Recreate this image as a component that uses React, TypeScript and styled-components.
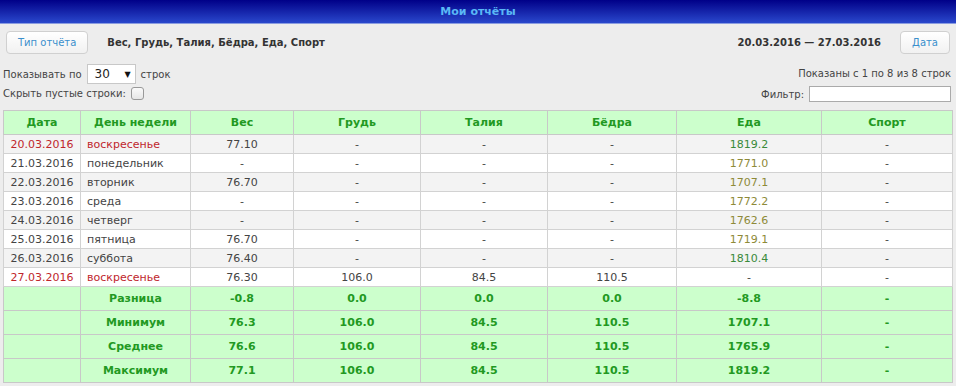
import styled, { createGlobalStyle } from "styled-components";

const GlobalStyle = createGlobalStyle`
    body {
        margin: 0;
        background: #ededed;
        font-family: "DejaVu Sans", Verdana, sans-serif;
        font-size: 11px;
        color: #333;
    }
`;

interface Row
{
    date: string;
    day: string;
    weight: string;
    chest: string;
    waist: string;
    hips: string;
    food: string;
    foodGood: boolean;
    sport: string;
    sunday?: boolean;
}

const rows: Row[] = [
    { date: "20.03.2016", day: "воскресенье", weight: "77.10", chest: "-", waist: "-", hips: "-", food: "1819.2", foodGood: true, sport: "-", sunday: true },
    { date: "21.03.2016", day: "понедельник", weight: "-", chest: "-", waist: "-", hips: "-", food: "1771.0", foodGood: false, sport: "-" },
    { date: "22.03.2016", day: "вторник", weight: "76.70", chest: "-", waist: "-", hips: "-", food: "1707.1", foodGood: false, sport: "-" },
    { date: "23.03.2016", day: "среда", weight: "-", chest: "-", waist: "-", hips: "-", food: "1772.2", foodGood: false, sport: "-" },
    { date: "24.03.2016", day: "четверг", weight: "-", chest: "-", waist: "-", hips: "-", food: "1762.6", foodGood: false, sport: "-" },
    { date: "25.03.2016", day: "пятница", weight: "76.70", chest: "-", waist: "-", hips: "-", food: "1719.1", foodGood: false, sport: "-" },
    { date: "26.03.2016", day: "суббота", weight: "76.40", chest: "-", waist: "-", hips: "-", food: "1810.4", foodGood: true, sport: "-" },
    { date: "27.03.2016", day: "воскресенье", weight: "76.30", chest: "106.0", waist: "84.5", hips: "110.5", food: "-", foodGood: false, sport: "-", sunday: true },
];

const totals = [
    { label: "Разница", values: [ "-0.8", "0.0", "0.0", "0.0", "-8.8", "-" ] },
    { label: "Минимум", values: [ "76.3", "106.0", "84.5", "110.5", "1707.1", "-" ] },
    { label: "Среднее", values: [ "76.6", "106.0", "84.5", "110.5", "1765.9", "-" ] },
    { label: "Максимум", values: [ "77.1", "106.0", "84.5", "110.5", "1819.2", "-" ] },
];

const columns = [ "Дата", "День недели", "Вес", "Грудь", "Талия", "Бёдра", "Еда", "Спорт" ];
const widths = [ 77, 110, 103, 127, 127, 129, 145, 131 ];

const TitleBar = styled.div`
    height: 23px;
    background: linear-gradient(#000088, #2a48cc);
    border-bottom: 1px solid #8a9ce0;
    display: flex;
    align-items: center;
    justify-content: center;
    color: #5ab8f5;
    font-weight: bold;
    font-size: 11px;
`;

const Toolbar = styled.div`
    display: flex;
    align-items: center;
    justify-content: space-between;
    padding: 7px 6px 0 6px;
`;

const ToolGroup = styled.div`
    display: flex;
    align-items: center;
    gap: 19px;
`;

const Button = styled.button`
    height: 23px;
    padding: 0 11px;
    background: linear-gradient(#ffffff, #f1f1f1);
    border: 1px solid #d0d0d0;
    border-radius: 4px;
    color: #3a8fcc;
    font-family: "DejaVu Sans", Verdana, sans-serif;
    font-size: 10px;
`;

const Summary = styled.span`
    font-weight: bold;
    font-size: 10px;
    color: #333;
`;

const Controls = styled.div`
    display: flex;
    justify-content: space-between;
    padding: 10px 5px 0 3px;
    font-size: 10px;
`;

const ControlColumn = styled.div<{ align: "start" | "end" }>`
    display: flex;
    flex-direction: column;
    align-items: flex-${p => p.align};
    gap: ${p => p.align === "end" ? "7px" : "3px"};
`;

const ControlLine = styled.div`
    display: flex;
    align-items: center;
    gap: 5px;
    color: #444;
`;

const Select = styled.div`
    display: flex;
    align-items: center;
    justify-content: space-between;
    padding: 0 4px 0 7px;
    box-sizing: border-box;
    width: 49px;
    height: 20px;
    border: 1px solid #c8c8c8;
    background: #fff;
    font-size: 12px;
    color: #222;
`;

const Arrow = styled.span`
    font-size: 8px;
    color: #111;
`;

const Checkbox = styled.span`
    display: inline-block;
    width: 11px;
    height: 11px;
    border: 1px solid #999;
    border-radius: 3px;
    background: linear-gradient(#fafafa, #e6e6e6);
`;

const FilterInput = styled.input`
    width: 142px;
    height: 16px;
    box-sizing: border-box;
    border: 1px solid #aaa;
    background: #fff;
    padding: 0;
    margin: 0;
`;

const TableWrap = styled.div`
    padding: 8px 3px 0 3px;
`;

const Table = styled.table`
    width: 949px;
    table-layout: fixed;
    border-collapse: collapse;
    border: 1px solid #c8c8c8;
`;

const HeadCell = styled.th`
    height: 23px;
    padding: 0;
    background: #ccffcc;
    color: #229922;
    font-size: 11px;
    font-weight: bold;
    border: 1px solid #c8c8c8;
    text-align: center;
`;

const DataRow = styled.tr<{ odd: boolean }>`
    background: ${p => p.odd ? "#f3f3f3" : "#ffffff"};
`;

const Cell = styled.td<{ tone?: string; left?: boolean }>`
    height: 18px;
    padding: 0 ${p => p.left ? "6px" : "0"};
    border: 1px solid #d2d2d2;
    text-align: ${p => p.left ? "left" : "center"};
    color: ${p => p.tone ?? "#444"};
    white-space: nowrap;
`;

const TotalCell = styled.td`
    height: 23px;
    padding: 0;
    background: #ccffcc;
    border: 1px solid #c8c8c8;
    text-align: center;
    color: #229922;
    font-size: 11px;
    font-weight: bold;
`;

const RED = "#c0262c";

const App = () =>
{
    return (
        <>
            <GlobalStyle />
            <TitleBar>Мои отчёты</TitleBar>
            <Toolbar>
                <ToolGroup>
                    <Button>Тип отчёта</Button>
                    <Summary>Вес, Грудь, Талия, Бёдра, Еда, Спорт</Summary>
                </ToolGroup>
                <ToolGroup>
                    <Summary>20.03.2016 — 27.03.2016</Summary>
                    <Button>Дата</Button>
                </ToolGroup>
            </Toolbar>
            <Controls>
                <ControlColumn align="start">
                    <ControlLine>
                        <span>Показывать по</span>
                        <Select><span>30</span><Arrow>▼</Arrow></Select>
                        <span>строк</span>
                    </ControlLine>
                    <ControlLine>
                        <span>Скрыть пустые строки:</span>
                        <Checkbox />
                    </ControlLine>
                </ControlColumn>
                <ControlColumn align="end">
                    <ControlLine style={{ marginTop: "4px" }}>Показаны с 1 по 8 из 8 строк</ControlLine>
                    <ControlLine>
                        <span>Фильтр:</span>
                        <FilterInput />
                    </ControlLine>
                </ControlColumn>
            </Controls>
            <TableWrap>
                <Table>
                    <colgroup>
                        {widths.map( ( w, i ) => <col key={i} style={{ width: w }} /> )}
                    </colgroup>
                    <thead>
                        <tr>
                            {columns.map( c => <HeadCell key={c}>{c}</HeadCell> )}
                        </tr>
                    </thead>
                    <tbody>
                        {rows.map( ( r, i ) => (
                            <DataRow key={r.date} odd={i % 2 === 0}>
                                <Cell tone={r.sunday ? RED : undefined}>{r.date}</Cell>
                                <Cell left tone={r.sunday ? RED : undefined}>{r.day}</Cell>
                                <Cell>{r.weight}</Cell>
                                <Cell>{r.chest}</Cell>
                                <Cell>{r.waist}</Cell>
                                <Cell>{r.hips}</Cell>
                                <Cell tone={r.food === "-" ? undefined : r.foodGood ? "#3a8a3a" : "#8e8a38"}>{r.food}</Cell>
                                <Cell>{r.sport}</Cell>
                            </DataRow>
                        ) )}
                        {totals.map( t => (
                            <tr key={t.label}>
                                <TotalCell />
                                <TotalCell>{t.label}</TotalCell>
                                {t.values.map( ( v, i ) => <TotalCell key={i}>{v}</TotalCell> )}
                            </tr>
                        ) )}
                    </tbody>
                </Table>
            </TableWrap>
        </>
    );
}

export default App;
